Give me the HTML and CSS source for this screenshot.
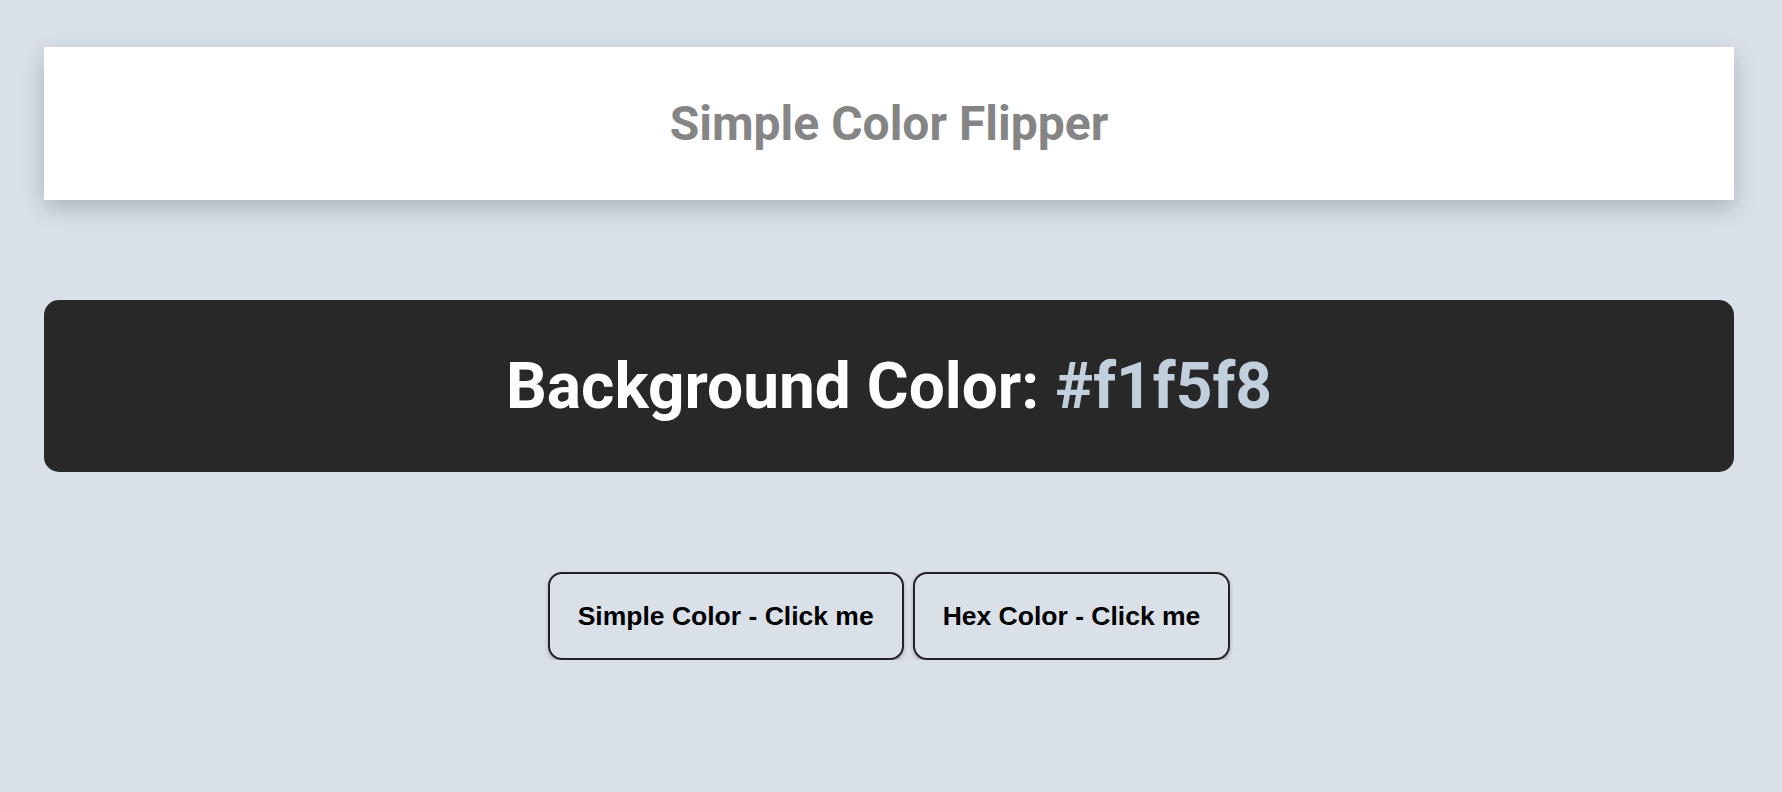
FILE: index.html
```html
<!DOCTYPE html>
<html lang="en">
<head>
<meta charset="utf-8">
<title>Simple Color Flipper</title>
<link rel="stylesheet" href="styles.css">
</head>
<body>
  <header class="topbar">
    <h1 class="topbar-title">Simple Color Flipper</h1>
  </header>
  <main class="content">
    <section class="banner">
      <h2 class="banner-text">Background Color: <span class="banner-hex">#f1f5f8</span></h2>
    </section>
    <div class="actions">
      <button class="btn">Simple Color - Click me</button>
      <button class="btn">Hex Color - Click me</button>
    </div>
  </main>
</body>
</html>
```
FILE: styles.css
```css
* { box-sizing: border-box; }
html, body { margin: 0; padding: 0; }
body {
  background: #d9e0e8;
  font-family: Roboto, "Liberation Sans", sans-serif;
  padding-top: 47px;
}
.topbar {
  margin: 0 48px 0 44px;
  height: 153px;
  background: #fff;
  display: flex;
  align-items: center;
  justify-content: center;
  box-shadow: 0 8px 22px rgba(0, 0, 0, 0.2);
}
.topbar-title {
  margin: 0;
  font-family: Roboto, sans-serif;
  font-weight: 700;
  font-size: 48px;
  color: #858585;
}
.content {
  margin: 100px 48px 0 44px;
}
.banner {
  height: 172px;
  background: #282828;
  border-radius: 15px;
  display: flex;
  align-items: center;
  justify-content: center;
}
.banner-text {
  margin: 0;
  font-family: Roboto, sans-serif;
  font-weight: 700;
  font-size: 64px;
  color: #fff;
}
.banner-hex { color: #c2cfdc; }
.actions {
  margin-top: 100px;
  display: flex;
  justify-content: center;
  gap: 9px;
}
.btn {
  font-family: "Liberation Sans", Arial, sans-serif;
  font-weight: 700;
  font-size: 26.5px;
  color: #000;
  background: #dae0e7;
  border: 2px solid #222;
  border-radius: 14px;
  padding: 0 28px;
  height: 88px;
  box-shadow: 0 2px 4px rgba(0, 0, 0, 0.25);
  cursor: pointer;
}
```
